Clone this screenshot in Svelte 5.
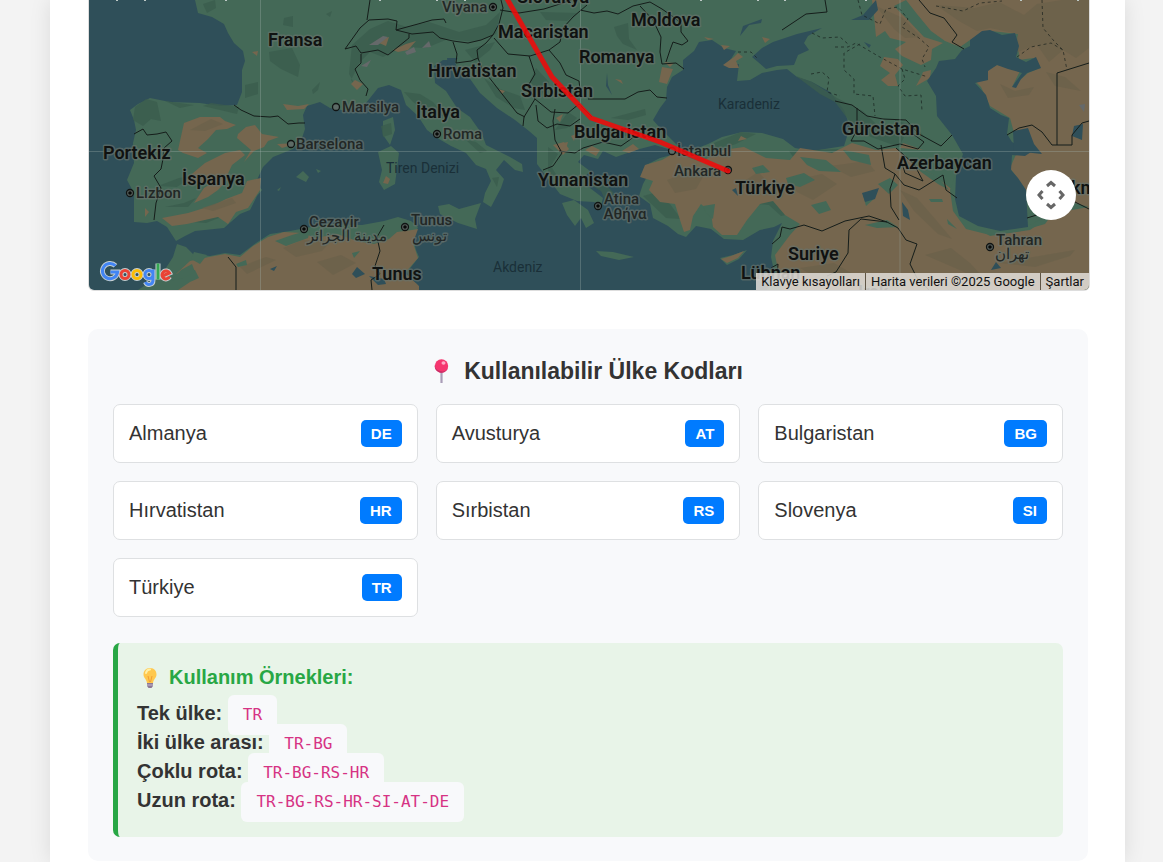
<script>
  const countries = [
    ['Almanya', 'DE'],
    ['Avusturya', 'AT'],
    ['Bulgaristan', 'BG'],
    ['Hırvatistan', 'HR'],
    ['Sırbistan', 'RS'],
    ['Slovenya', 'SI'],
    ['Türkiye', 'TR']
  ];

  const examples = [
    ['Tek ülke:', 'TR'],
    ['İki ülke arası:', 'TR-BG'],
    ['Çoklu rota:', 'TR-BG-RS-HR'],
    ['Uzun rota:', 'TR-BG-RS-HR-SI-AT-DE']
  ];

  const nations = [
    ['Fransa', 268, 46], ['Portekiz', 103, 159], ['İspanya', 182, 185], ['Slovakya', 517, 3],
    ['Moldova', 631, 26], ['Macaristan', 498, 38], ['Romanya', 579, 63], ['Hırvatistan', 428, 77],
    ['Sırbistan', 521, 97], ['İtalya', 416, 118], ['Bulgaristan', 574, 138], ['Yunanistan', 538, 186],
    ['Türkiye', 735, 194], ['Gürcistan', 842, 135], ['Azerbaycan', 897, 169], ['Suriye', 788, 260],
    ['Lübnan', 741, 279], ['Tunus', 372, 280], ['Türkmenistan', 1044, 194], ['Irak', 858, 298]
  ];

  const cities = [
    ['Viyana', 442, 12, 493, 7, 1], ['Marsilya', 342, 112, 336, 107, 0], ['Barselona', 296, 149, 291, 144, 0],
    ['Roma', 443, 139, 437, 134, 1], ['Lizbon', 136, 198, 130, 193, 1], ['Cezayir', 309, 227, 304, 229, 1],
    ['Tunus', 411, 225, 405, 227, 1], ['İstanbul', 677, 156, 672, 151, 0], ['Ankara', 674, 176, 728, 170, 1],
    ['Atina', 604, 204, 598, 206, 1], ['Tahran', 996, 245, 990, 247, 1]
  ];

  const locals = [['مدينة الجزائر', 347, 241], ['تونس', 429, 241], ['Αθήνα', 625, 219], ['تهران', 1012, 259]];
  const seas = [['Tiren Denizi', 386, 173], ['Karadeniz', 718, 109], ['Akdeniz', 493, 272]];

  const tan = [
    'M178 150L184 123L200 117L220 117L225 121L236 125L227 129L216 130L208 139L198 148L207 153L198 158L183 153Z',
    'M238 134L246 127L255 125L262 134L279 137L268 141L264 147L254 151L244 162L251 150L237 138Z',
    'M184 182L193 173L205 163L225 153L240 150L245 155L232 165L226 178L212 184L194 184Z',
    'M162 218L188 213L214 205L226 199L242 193L247 181L261 178L260 190L256 196L248 208L236 212L228 224L218 217L187 224L172 226Z',
    'M204 188L220 178L229 178L218 190L208 197L194 203Z',
    'M283 104L298 106L309 104L304 109L287 110Z', 'M277 144L298 143L282 148Z', 'M252 52L258 51L257 56Z',
    'M351 84L355 80L363 84L357 90Z', 'M382 39L389 37L386 46L379 43Z', 'M393 50L406 44L416 41L408 50L398 52Z',
    'M498 89L505 91L502 94Z', 'M556 118L563 114L560 122Z', 'M563 143L568 142L566 149Z', 'M571 136L576 134L574 141Z',
    'M553 145L564 142L569 149L563 155Z', 'M585 150L592 146L600 150L596 156Z', 'M622 151L633 144L639 149L629 153Z',
    'M662 67L673 69L667 84L659 82Z', 'M615 79L621 80L623 84Z', 'M664 62L674 63L670 67Z',
    'M721 45L730 46L724 50Z', 'M723 65L734 57L738 53L743 57L736 61L739 68L729 68Z', 'M762 37L770 39L765 43Z', 'M704 37L714 39L708 40Z',
    'M645 165L662 160L674 153L682 155L701 162L722 150L744 147L766 158L790 160L800 148L832 153L852 143L876 150L896 148L912 163L935 176L955 192L958 216L990 236L1030 230L1055 213L1089 207V290H782L775 255L790 235L800 224L785 215L773 201L760 204L747 220L737 235L722 235L713 227L711 213L701 204L693 216L690 230L684 232L680 220L675 204L660 202L649 190L653 181L640 177Z',
    'M872 0H1089V207L1068 201L1033 211L1026 190L1010 168L1018 150L1034 145L1022 133L1017 144L1010 118L990 106L981 87L975 81L988 80L987 70L997 65L1021 69L1012 87L1028 73L1040 68L1033 58L1019 60L1018 34L991 31L970 40L960 47L945 41L931 31L917 14L906 0L894 6L908 20L924 37L943 43L932 49L931 60L921 65L902 56L895 49L906 42L890 38L885 31L876 37L874 16Z',
    'M884 57L898 59L903 65L895 75L898 86L888 86L881 80L890 73L880 66Z', 'M923 72L931 70L930 78L916 86L921 77Z',
    'M176 274L190 261L209 257L225 254L240 257L253 246L268 237L284 232L302 233L316 238L337 234L357 241L374 244L389 239L397 232L412 230L418 229L413 243L418 258L405 273L419 286V290H178L190 282L199 278L195 270Z',
    'M721 259L731 256L744 251L738 258L727 263Z', 'M386 176L390 179L388 184L383 183Z', 'M145 208L149 212L145 217Z',
    'M903 143L923 150L900 148Z', 'M741 136L747 139L738 141Z'
  ];

  const shade = [
    'M135 107L146 99L157 102L161 121L151 119L143 126L133 120Z', 'M165 101L194 105L180 108Z', 'M211 103L239 107L237 114L220 110L203 106Z',
    'M203 4L215 0L216 8L207 13Z', 'M284 18L293 16L293 27L283 25Z', 'M269 52L292 48L300 65L298 77L281 69L270 61Z',
    'M245 85L258 82L258 94L245 98Z', 'M312 90L320 82L318 90L313 94Z', 'M326 14L332 11L330 17Z',
    'M352 45L370 29L388 21L407 27L429 22L459 32L486 25L500 12L496 34L475 42L448 39L426 48L403 47L383 57L370 52L360 62L351 80L358 90L349 74Z',
    'M465 50L495 42L490 50L475 62Z', 'M484 78L500 89L520 96L525 110L514 108L496 97Z', 'M536 68L549 82L541 96L530 81Z',
    'M404 92L420 94L433 102L446 117L430 113L413 102Z', 'M466 140L476 142L487 151L480 153Z',
    'M614 27L628 23L629 39L637 50L623 44L617 36Z', 'M611 118L645 109L646 115L628 120Z', 'M555 130L568 112L577 118L567 128Z',
    'M596 132L626 126L641 132L617 138Z', 'M548 147L558 154L551 166L560 181L548 173Z', 'M540 12L577 13L567 21L546 20Z',
    'M714 143L741 132L756 134L736 144L716 150Z', 'M789 151L838 149L842 156L821 160L794 158Z', 'M796 76L812 82L837 98L863 111L881 129L904 137L899 147L871 137L850 122L835 102L820 94Z',
    'M758 204L773 195L784 190L799 202L799 212L781 216L769 205Z', 'M643 196L654 193L670 204L681 219L666 218Z',
    'M955 195L964 210L984 222L1005 231L975 230L959 219Z', 'M492 178L499 177L497 187Z', 'M381 126L391 123L392 134L383 137Z',
    'M158 186L179 178L193 176L177 187Z', 'M165 207L184 203L196 198L188 207Z', 'M180 221L202 216L221 217L206 223Z', 'M220 286L244 273L267 264L247 280Z',
    'M590 185L602 181L614 193L607 204L601 191Z', 'M895 120L914 126L926 138L915 133L895 130Z'
  ];

  // Darker tone over the arid ground
  const ridges = [
    'M190 130L211 119L223 124L205 131Z', 'M202 208L232 198L236 203L213 211Z', 'M283 248L303 240L332 240L322 251L296 257Z', 'M240 267L266 257L276 260L247 274Z',
    'M317 262L341 255L356 263L333 275Z', 'M667 180L692 171L704 175L696 189L675 193Z', 'M737 186L758 172L764 178L754 192Z',
    'M790 181L822 174L837 184L813 200L797 192Z', 'M830 166L867 161L875 171L851 177Z', 'M900 190L917 198L936 220L952 239L938 234L914 211Z',
    'M925 255L951 248L970 263L991 286L962 271Z', 'M936 5L975 8L999 2L1024 15L1037 4L1062 0L1089 0V48L1076 58L1063 50L1049 62L1037 45L1012 54L1018 34L990 28L977 31L959 21Z',
    'M1000 84L1015 91L1034 87L1029 95L1008 98Z', 'M1046 72L1055 86L1081 91L1065 77Z', 'M876 6L903 18L921 37L905 38L894 29Z', 'M800 268L834 263L853 274L829 285Z',
    'M1000 263L1033 257L1075 250L1070 256L1035 267Z'
  ];

  const greens = [
    'M275 241L292 235L310 230L308 238L286 246Z', 'M236 264L246 260L247 265L238 267Z', 'M194 252L207 255L200 264L191 259Z', 'M170 281L181 270L192 264L195 272L183 278Z',
    'M352 253L360 251L354 258Z', 'M786 178L804 173L815 180L800 187L788 184Z', 'M811 205L826 201L831 210L819 214Z', 'M752 168L763 165L770 172L756 174Z',
    'M865 225L887 220L898 227L877 228Z', 'M907 157L916 166L938 177L949 190L938 184L921 172Z', 'M929 199L942 199L943 202L931 202Z', 'M947 219L957 229L948 224Z',
    'M800 157L826 160L841 172L819 171L807 165Z', 'M843 150L869 155L871 165L851 160Z', 'M703 206L715 204L713 219L706 213Z', 'M878 184L890 178L898 185L889 194Z', 'M863 195L875 198L866 206Z'
  ];

  const waters = [
    'M352 274L357 267L365 274L356 278Z', 'M270 269L277 266L274 271Z', 'M743 26L762 19L761 23L749 25L740 36Z', 'M862 193L879 188L875 199L865 202Z',
    'M902 202L908 210L910 220L903 216Z', 'M863 15L876 0L878 10L869 20L851 20Z', 'M1074 126L1083 124L1082 140L1072 136Z', 'M1013 131L1028 128L1034 144L1042 154L1014 151Z',
    'M732 190L736 188L738 196Z', 'M996 262L1001 268L991 270Z', 'M607 73L606 86L612 95L608 85Z', 'M864 42L871 45L869 48Z', 'M447 58L458 58L448 67Z', 'M369 276L384 279L386 284L378 285Z'
  ];

  const borders = [
    'M234 105L241 110L254 116L270 117L278 116L288 124L299 123L305 123', 'M134 134L143 129L147 135L157 134L166 132L172 141L164 148L163 159L161 169L154 176L161 188L156 203L154 220',
    'M228 257L236 267L236 290', 'M384 225L377 237L380 251L375 266L380 274L371 280L372 290',
    'M345 49L360 28L369 20L388 19L397 21L396 30L418 24L432 20L444 19L446 23', 'M396 30L412 34L433 32L440 38L453 41L468 43L481 40L493 35L499 24L503 8L501 0',
    'M345 49L356 46L361 53L378 50L388 55L404 42L409 38L409 34', 'M361 54L361 63L355 69L360 80L368 89L366 96', 'M367 20L370 0',
    'M493 35L486 43L477 50L478 58L482 69L488 76L506 99L517 113L525 117', 'M453 42L457 54L456 63L471 61L478 58',
    'M494 38L508 54L530 56L549 50L560 42L563 28L573 17L587 5', 'M500 10L519 13L544 9L563 3L571 0', 'M529 56L535 74L528 86L535 99L524 117L523 126',
    'M549 50L560 63L566 75L579 81L580 89', 'M535 99L551 112L568 113L579 104L592 117', 'M536 105L538 121L547 128L557 124L570 126L580 119', 'M555 109L553 121L555 140L562 153L553 166L543 170',
    'M588 99L625 99L638 92L650 90L657 97L667 98', 'M580 10L594 13L607 11L618 14L633 6L650 2L662 9L672 16L681 23L681 32L688 41L682 45L673 42L670 50L666 62',
    'M640 6L653 20L661 37L660 52L662 64L676 63L684 69', 'M559 151L575 153L583 148L603 142L621 146L631 139L639 132',
    'M782 30L806 14L827 12L825 0', 'M772 244L780 237L782 227L790 229L804 225L822 231L845 221L869 216L887 222L898 228L906 240L917 244L910 264L917 278L929 290',
    'M887 222L861 219L849 230L848 253L836 272L827 276', 'M771 268L778 264L777 278', 'M835 101L852 105L867 116L883 119L906 120L919 134L941 146L952 135', 'M857 108L857 130L851 141L864 141L878 149L900 144L918 149L924 142L913 134',
    'M881 145L885 168L895 174L890 189L891 207L899 220', 'M895 174L904 185L919 190L943 175L946 190L957 198', 'M896 148L914 164L923 181L905 173L901 160',
    'M919 0L930 13L944 18L957 35L952 42L964 49', 'M1007 135L1019 128L1032 125L1042 132L1052 145H1072L1072 135L1082 123L1089 121', 'M1057 145V73L1089 63', 'M1027 218L1040 214L1051 209L1065 200L1075 202L1089 209'
  ];

  const dashes = [
    'M835 47L848 47L856 43L878 56L902 69L928 77', 'M858 0L862 15L880 24L886 9L898 7L908 19L902 27L919 38L929 47L922 59L925 67',
    'M860 44L844 53L844 70L854 79L854 94L873 96L875 116', 'M902 69L905 79L898 86L905 96L921 95L922 111', 'M936 6L963 11L980 3L1002 1', 'M1042 0L1043 28L1054 41L1063 50L1067 70', 'M1017 57L1031 47L1051 43L1063 50',
    'M738 52L751 52L757 58', 'M812 33L822 38L840 37L848 44', 'M811 74L822 72L829 78L827 92L840 96'
  ];
</script>

<main>
  <section class="map" aria-label="Rota haritası">
    <svg class="chart" viewBox="89 0 1000 290" preserveAspectRatio="xMidYMid slice">
      <rect x="89" width="1000" height="290" fill="#2f4f59" />
      <g class="land">
        <path d="M195 0L198 13L212 17L224 24L228 33L234 43L243 51L245 61L242 70L242 92L237 105L220 106L200 103L170 102L150 98L138 104L130 110L134 120L136 130L133 143L134 163L127 180L134 193L134 222L147 223L157 221L167 227L176 241L185 236L195 231L224 228L232 221L240 214L250 210L257 196L262 190L256 182L263 167L273 157L293 149L301 141L305 129L303 115L307 106L320 102L330 108L347 111L366 103L378 88L389 85L401 90L406 105L418 116L427 130L439 139L451 146L466 153L476 165L486 169L491 181L485 193L483 202L491 207L501 188L504 179L496 170L504 160L515 170L523 172L522 164L510 157L486 145L482 134L470 117L457 108L446 91L435 83L434 66L443 60L455 60L457 70L468 76L480 93L497 108L515 120L529 131L537 138L537 164L549 180L560 194L577 201L594 202L601 206L603 198L590 188L584 178L590 171L578 162L584 155L598 159L603 151L616 157L636 150L655 145L668 149L682 150L661 129L653 120L660 108L666 100L667 87L672 77L683 70L683 60L694 51L699 42L712 40L724 48L736 51L731 59L725 65L739 64L737 81L750 80L762 73L777 70L787 69L797 77L812 82L830 92L844 110L850 127L844 146L812 151L795 148L783 139L762 133L742 132L722 137L708 144L695 149L679 153L660 158L646 165L650 171L643 184L639 196L650 204L653 218L668 226L678 234L686 237L696 226L711 229L724 239L743 240L760 230L774 227L782 223L773 241L771 257L774 271L767 290H1089V0Z" />
        <path d="M138 290L162 274L173 257L177 244L186 247L193 254L210 256L225 253L240 255L256 243L270 234L290 231L327 224L362 225L384 221L398 217L411 221L418 227L413 239L416 250L419 257L408 271L405 278L417 284L419 290Z" />
        <path d="M562 203L574 200L588 210L594 223L586 228L581 218L575 226L567 215Z" />
        <path d="M438 206L449 204L459 209L481 203L475 219L477 229L458 223L440 214Z" />
        <path d="M378 152L391 146L399 153L395 184L384 190L379 182L382 170Z" />
        <path d="M383 121L393 117L395 130L390 145L383 135Z" />
        <path d="M596 251L613 252L634 257L619 260L601 256Z" />
        <path d="M720 258L733 255L747 250L739 259L727 265Z" />
        <path d="M296 177L303 171L309 177L306 182Z" /><path d="M316 169L321 171L318 173Z" /><path d="M277 190L281 187L279 191Z" />
      </g>
      <g fill="#3b5d4e" opacity=".8">{#each shade as d}<path {d} />{/each}</g>
      <g fill="#75664e">{#each tan as d}<path {d} />{/each}</g>
      <g fill="#6b614b" opacity=".75">{#each ridges as d}<path {d} />{/each}</g>
      <g fill="#446957">{#each greens as d}<path {d} />{/each}
        <path d="M957 170L956 199L969 217L1000 230L1032 224L1053 213L1045 224L1021 231L990 235L966 229L953 211L950 190Z" />
      </g>
      <g fill="#65696a"><path d="M369 45L383 36L388 37L378 45Z" /><path d="M405 52L414 47L416 52L407 55Z" /><path d="M422 48L429 41L431 47Z" /><path d="M361 66L371 60L367 67Z" /><path d="M1079 105L1085 104L1084 112Z" /></g>
      <g fill="#2f4f59">
        <path d="M752 57L762 48L773 42L797 34L822 28L808 36L804 43L809 50L798 55L794 65L777 66L766 69L758 62Z" />
        <path d="M970 40L982 31L990 30L1002 35L1015 33L1019 46L1016 57L1026 62L1036 57L1041 68L1027 73L1021 79L1016 88L1012 87L1022 73L1008 69L997 65L988 71L988 80L975 83L986 95L990 108L1001 115L1009 118L1007 134L1012 142L1023 148L1034 150L1025 156L1012 155L1011 170L1018 178L1026 190L1028 227L1000 231L978 226L959 216L955 199L956 176L963 154L952 135L937 116L936 96L927 81L936 68L939 61L955 59L962 50L970 46Z" />
        <path d="M626 158L641 151L654 154L665 151L668 155L654 159Z" />
        {#each waters as d}<path {d} />{/each}
      </g>
      <g fill="none" stroke="#151d1a" stroke-width="1" stroke-linejoin="round">
        {#each borders as d}<path {d} />{/each}
        <g stroke-dasharray="3 3" opacity=".65">{#each dashes as d}<path {d} />{/each}</g>
      </g>
      <path d="M89 151.5H1089M260.500 0V290M580.500 0V290M900 0V290" fill="none" stroke="#a4b5ad" stroke-opacity=".32" />
      <path d="M117 0v1M145 0v1M226 0v1M380 0v1M437 0v1M465 0v1M701 0v1M758 0v1M785 0v1M866 0v1M1021 0v1M1078 0v1" stroke="#bdc9c6" stroke-width="2" />

      <g class="seas">{#each seas as [name, x, y]}<text {x} {y}>{name}</text>{/each}</g>
      <g class="nations">{#each nations as [name, x, y]}<text {x} {y}>{name}</text>{/each}</g>
      <g class="cities">
        {#each cities as [name, x, y, cx, cy, capital]}
          <text {x} {y}>{name}</text>
          <circle {cx} {cy} r="3.500" fill={capital ? '#59625e' : '#5d6b66'} stroke="#101413" stroke-width="1.300" />
          {#if capital}<circle {cx} {cy} r="1.800" fill="#080a09" />{/if}
        {/each}
        {#each locals as [name, x, y]}<text {x} {y} text-anchor="middle">{name}</text>{/each}
      </g>
      <path d="M506 -3L552 77L591 118L660 142L728 171" fill="none" stroke="#f00a0a" stroke-opacity=".88" stroke-width="5" stroke-linejoin="round" stroke-linecap="round" />
    </svg>

    <a class="logo" href="#harita" aria-label="Google">
      <svg width="76" height="30" viewBox="0 0 76 30" fill="none">
        {#each [true, false] as halo}
          <g class:halo stroke-width="3">
            <path d="M16.500 5.800A7.600 7.600 0 1 0 18.600 12H11.500" stroke="#4285f4" />
            <circle cx="26" cy="14.500" r="4" stroke="#ea4335" />
            <circle cx="38" cy="14.500" r="4" stroke="#fbbc04" />
            <path d="M54 9.500V20C54 25.500 48 25.500 46.500 22M54 14.500A4 4 0 1 0 46 14.500A4 4 0 1 0 54 14.500" stroke="#4285f4" />
            <path d="M59 3.500V19.500" stroke="#34a853" />
            <path d="M63.500 16L70.500 13A4 4 0 1 0 70.500 16.800" stroke="#ea4335" />
          </g>
        {/each}
      </svg>
    </a>

    <button class="pan" aria-label="Harita kamera kontrolleri">
      <svg width="30" height="30" viewBox="0 0 30 30" fill="none" stroke="#666" stroke-width="3">
        <path d="M11 6L15 2.500L19 6M11 24L15 27.500L19 24M6.500 11L3 15L6.500 19M23.500 11L27 15L23.500 19" />
      </svg>
    </button>

    <div class="credits">
      <button>Klavye kısayolları</button>
      <span>Harita verileri ©2025 Google</span>
      <a href="#sartlar">Şartlar</a>
    </div>
  </section>

  <section class="codes">
    <h2>
      <svg width="18" height="26" viewBox="0 0 18 26" aria-hidden="true">
        <path d="M8.500 13V25" stroke="#aa9db8" stroke-width="2.200" />
        <circle cx="8.500" cy="8" r="6.700" fill="#f5366f" />
        <path d="M2 6A6.700 6.700 0 0 0 15 10A7 7 0 0 1 2 6" fill="#c72f67" />
        <ellipse cx="10.500" cy="5" rx="2" ry="1.700" fill="#ffa9c5" />
      </svg>
      Kullanılabilir Ülke Kodları
    </h2>
    <ul>
      {#each countries as [name, code]}
        <li><span>{name}</span><b>{code}</b></li>
      {/each}
    </ul>
    <div class="examples">
      <h3>
        <svg width="16" height="24" viewBox="0 0 16 24" aria-hidden="true">
          <path d="M8 2C3.500 2 1.500 5 1.500 8.500C1.500 12 4.500 13 5 17H11C11.500 13 14.500 12 14.500 8.500C14.500 5 12.500 2 8 2Z" fill="#ffc84e" />
          <path d="M4 7C4.500 4.500 6 3.500 8 3.500" fill="none" stroke="#fff0a8" stroke-width="2" stroke-linecap="round" />
          <path d="M6 10L7.500 16M10 10L8.500 16" stroke="#f29c35" />
          <path d="M5 17H11V20L9.500 22H6.500L5 20Z" fill="#8d7896" />
          <path d="M5 19H11" stroke="#c5b8ca" />
        </svg>
        Kullanım Örnekleri:
      </h3>
      {#each examples as [label, code]}
        <p><strong>{label}</strong> <code>{code}</code></p>
      {/each}
    </div>
  </section>
</main>

<style>
  :global(body) { background: #f3f3f3; }
  main {
    box-sizing: border-box;
    min-height: 100vh;
    margin: 0 38px 0 50px;
    padding: 0 37px 0 38px;
    background: #fff;
    box-shadow: 0 0 20px rgba(0, 0, 0, .1);
    color: #333;
    font-family: "Liberation Sans", Arial, sans-serif;
  }
  .map {
    position: relative;
    height: 290px;
    margin-right: -2px;
    overflow: hidden;
    border: 1px solid #ddd;
    border-top: 0;
    border-radius: 0 0 6px 6px;
    font-family: Roboto, sans-serif;
  }
  .chart { display: block; width: 100%; height: 100%; }
  .land { fill: #446957; }
  text { paint-order: stroke; stroke-linejoin: round; }
  .nations { font-size: 18px; font-weight: 600; fill: #101211; stroke: #68736d; stroke-opacity: .65; stroke-width: 3px; }
  .cities { font-size: 15px; font-weight: 500; fill: #222725; }
  .cities text { stroke: #68736d; stroke-opacity: .65; stroke-width: 3px; }
  .seas { font-size: 14px; fill: #1a2f38; }
  .logo { position: absolute; left: 10px; bottom: 0; height: 30px; }
  .halo path, .halo circle { stroke: #c6d0d2; stroke-width: 5px; }
  .pan {
    position: absolute;
    right: 13px;
    bottom: 70px;
    display: grid;
    place-items: center;
    width: 50px;
    height: 50px;
    padding: 0;
    border: 0;
    border-radius: 50%;
    background: #fff;
  }
  .credits {
    position: absolute;
    right: 0;
    bottom: 0;
    display: flex;
    background: rgba(228, 224, 219, .84);
    font-size: 13px;
    line-height: 17px;
  }
  .credits > * { padding: 0 5px; border: 0; background: none; color: #111; font: inherit; text-decoration: none; white-space: nowrap; }
  .credits > * + * { border-left: 1px solid #5f5545; }
  .codes { margin-top: 38px; padding: 24px 25px; border-radius: 10px; background: #f8f9fb; }
  h2, h3 { display: flex; align-items: center; margin: 0; }
  h2 { justify-content: center; gap: 13px; margin-bottom: 15px; font-size: 23px; line-height: 36px; }
  ul { display: grid; grid-template-columns: repeat(3, minmax(0, 1fr)); gap: 18px; margin: 0; padding: 0; list-style: none; }
  li {
    display: flex;
    align-items: center;
    justify-content: space-between;
    padding: 15px;
    border: 1px solid #dee0e2;
    border-radius: 7px;
    background: #fff;
    font-size: 20px;
    line-height: 27px;
  }
  li b { padding: 0 10px; border-radius: 5px; background: #007bff; color: #fff; font-size: 15px; }
  .examples { margin-top: 26px; padding: 20px 19px 22px; border-left: 5px solid #28a745; border-radius: 7px; background: #e8f4e8; }
  h3 { gap: 11px; margin-bottom: 7px; padding-left: 5px; color: #28a745; font-size: 20px; line-height: 29px; }
  p { margin: 0; font-size: 20px; line-height: 29px; }
  code { padding: 10px 15px 11px; border-radius: 6px; background: #f8f9fb; color: #d63384; font-family: "DejaVu Sans Mono", monospace; font-size: 16px; line-height: 1; }
</style>
